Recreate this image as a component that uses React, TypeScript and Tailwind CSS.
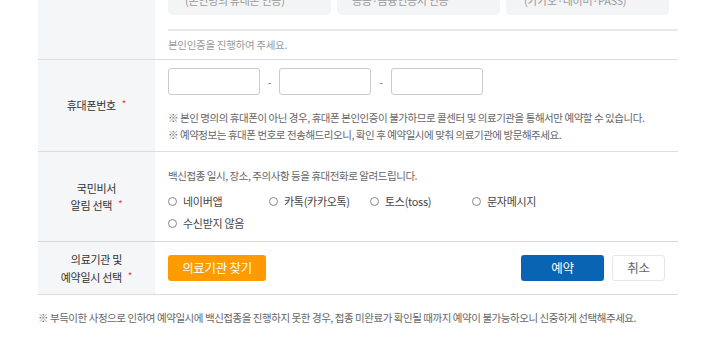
const font = { fontFamily: '"Noto Sans CJK KR", "Noto Sans", sans-serif' };

function Star() {
  return <span className="ml-[6px] text-[#e8413c] text-[10px] relative top-[-2px]">*</span>;
}

function Radio({ label }: { label: string }) {
  return (
    <label className="flex items-center gap-[6px] text-[11px] text-[#444]">
      <span className="w-[9px] h-[9px] rounded-full border border-[#888] bg-white" />
      {label}
    </label>
  );
}

export default function App() {
  return (
    <div className="w-[720px] h-[360px] overflow-hidden bg-white tracking-[-0.3px]" style={font}>
      <div className="mt-[-35px] ml-[38px] w-[640px]">
        {/* 본인인증 */}
        <div className="flex border-b border-[#dcdcdc]">
          <div className="w-[117px] bg-[#f5f6f8]" />
          <div className="flex-1 pl-[13px] pt-[10px]">
            <div className="flex gap-[6px] w-[502px]">
              <div className="h-[40px] w-[163px] rounded-[5px] bg-[#f3f4f6] pl-[17px] pt-[17px] text-[11px] text-[#999]">(본인명의 휴대폰 인증)</div>
              <div className="h-[40px] w-[163px] rounded-[5px] bg-[#f3f4f6] pl-[15px] pt-[17px] text-[11px] text-[#999]">공동·금융인증서 인증</div>
              <div className="h-[40px] w-[163px] rounded-[5px] bg-[#f3f4f6] pl-[18px] pt-[17px] text-[11px] text-[#999]">(카카오·네이버·PASS)</div>
            </div>
            <div className="mt-[14px] border-t-2 border-[#e8e8e8] h-[30px] flex items-center text-[10.5px] text-[#999]">
              본인인증을 진행하여 주세요.
            </div>
          </div>
        </div>

        {/* 휴대폰번호 */}
        <div className="flex border-b border-[#dcdcdc] h-[92px]">
          <div className="w-[117px] bg-[#f5f6f8] flex items-center justify-center text-[11px] text-[#333]">
            <span>휴대폰번호<Star /></span>
          </div>
          <div className="flex-1 pl-[13px] pt-[8px]">
            <div className="flex items-center">
              <div className="w-[92px] h-[27px] rounded-[3px] border border-[#ccc]" />
              <span className="w-[19px] text-center text-[10px] text-[#666]">-</span>
              <div className="w-[92px] h-[27px] rounded-[3px] border border-[#ccc]" />
              <span className="w-[20px] text-center text-[10px] text-[#666]">-</span>
              <div className="w-[92px] h-[27px] rounded-[3px] border border-[#ccc]" />
            </div>
            <div className="mt-[14px] text-[10.5px] text-[#666] leading-[17px] tracking-[-0.45px]">
              <p>※ 본인 명의의 휴대폰이 아닌 경우, 휴대폰 본인인증이 불가하므로 콜센터 및 의료기관을 통해서만 예약할 수 있습니다.</p>
              <p>※ 예약정보는 휴대폰 번호로 전송해드리오니, 확인 후 예약일시에 맞춰 의료기관에 방문해주세요.</p>
            </div>
          </div>
        </div>

        {/* 국민비서 */}
        <div className="flex border-b border-[#d6d6d6] h-[90px]">
          <div className="w-[117px] bg-[#f5f6f8] flex flex-col items-center justify-center text-[11px] text-[#333] leading-[17px]">
            <span>국민비서</span>
            <span>알림 선택<Star /></span>
          </div>
          <div className="flex-1 pl-[13px] pt-[16px]">
            <p className="text-[10.5px] text-[#666] tracking-[-0.45px]">백신접종 일시, 장소, 주의사항 등을 휴대전화로 알려드립니다.</p>
            <div className="mt-[9px] grid grid-cols-[101px_101px_102px_auto] gap-y-[6px]">
              <Radio label="네이버앱" />
              <Radio label="카톡(카카오톡)" />
              <Radio label="토스(toss)" />
              <Radio label="문자메시지" />
              <Radio label="수신받지 않음" />
            </div>
          </div>
        </div>

        {/* 의료기관 */}
        <div className="flex border-b border-[#dcdcdc] h-[53px]">
          <div className="w-[117px] bg-[#f5f6f8] flex flex-col items-center justify-center text-[11px] text-[#333] leading-[18px]">
            <span>의료기관 및</span>
            <span>예약일시 선택<Star /></span>
          </div>
          <div className="flex-1 pl-[13px] pr-[13px] flex items-center">
            <button className="w-[98px] h-[26px] rounded-[3px] bg-[#ff9a00] text-white text-[12.5px]">의료기관 찾기</button>
            <div className="ml-auto flex gap-[8px]">
              <button className="w-[83px] h-[26px] rounded-[3px] bg-[#0a64b4] text-white text-[12.5px]">예약</button>
              <button className="w-[53px] h-[26px] rounded-[3px] bg-white border border-[#e6e6e6] text-[#666] text-[12.5px]">취소</button>
            </div>
          </div>
        </div>

        <p className="mt-[15px] text-[10.5px] text-[#666] tracking-[-0.45px]">
          ※ 부득이한 사정으로 인하여 예약일시에 백신접종을 진행하지 못한 경우, 접종 미완료가 확인될 때까지 예약이 불가능하오니 신중하게 선택해주세요.
        </p>
      </div>
    </div>
  );
}
